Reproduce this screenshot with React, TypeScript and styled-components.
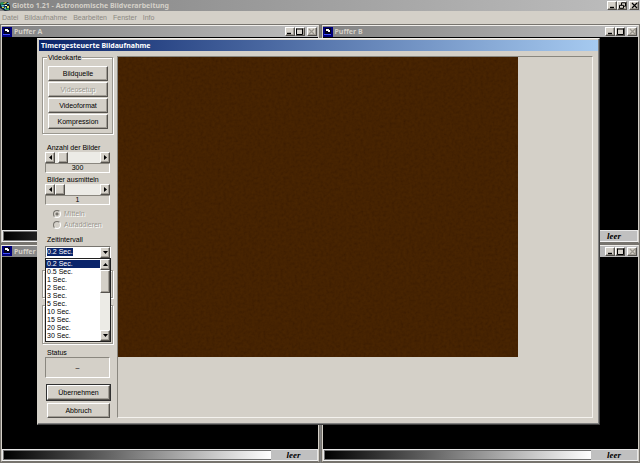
import React, { useState } from "react";
import styled, { createGlobalStyle, css } from "styled-components";

const face = "#d4d0c8";
const ui = `"Liberation Sans", Arial, sans-serif`;
const caption = `"Noto Sans", "Open Sans", sans-serif`;

const GlobalStyle = createGlobalStyle`
  *, *::before, *::after { box-sizing: border-box; }
  body { margin: 0; background: ${face}; color: #000; font: 7px/8px ${ui}; }
  button, select, input { margin: 0; padding: 0; border-radius: 0; font: inherit; color: inherit; }
  svg { display: block; flex: none; }
`;

const raised = css`
  background: ${face};
  border: 1px solid;
  border-color: #fff #55524d #55524d #fff;
  box-shadow: inset -1px -1px #a09c94;
`;

const Desktop = styled.div`
  position: relative;
  min-height: 100vh;
  display: flex;
  flex-direction: column;
`;

const TitleBar = styled.header<{ $kind: "main" | "child" | "dialog" }>`
  display: flex;
  align-items: center;
  height: 11px;
  flex: none;
  padding: ${(p) => (p.$kind === "dialog" ? "0 2px" : "0 1px 0 0")};
  gap: 2px;
  color: ${(p) => (p.$kind === "dialog" ? "#fff" : face)};
  background: ${(p) =>
    p.$kind === "dialog"
      ? "linear-gradient(90deg, #0a246a, #a6caf0)"
      : "linear-gradient(90deg, #828282, #bebebe)"};
`;

const Title = styled.h1`
  flex: 1;
  margin: 0;
  font: bold 7px/11px ${caption};
  white-space: nowrap;
`;

const Controls = styled.div`
  display: flex;
  & > :last-child { margin-left: 2px; }
`;

const ControlButton = styled.button`
  ${raised}
  width: 10px;
  height: 9px;
  display: grid;
  place-items: center;
`;

const Menu = styled.nav`
  display: flex;
  gap: 6px;
  height: 13px;
  padding: 0 2px;
  flex: none;
  line-height: 13px;
`;

const MenuLink = styled.a`
  color: #8b8882;
  text-decoration: none;
`;

const Workspace = styled.main`
  flex: 1;
  display: grid;
  grid-template: 1fr 1fr / 1fr 1fr;
  column-gap: 1px;
  background: #808080;
`;

const BufferWindow = styled.section`
  display: flex;
  flex-direction: column;
  border: 2px solid ${face};
  border-top-color: #f0eeea;
  border-bottom-color: #77746e;
  outline: 1px solid #77746e;
  outline-offset: -1px;
`;

const Canvas = styled.div`
  flex: 1;
  background: #000;
`;

const BufferStatus = styled.footer`
  display: flex;
  height: 12px;
  flex: none;
  background: #c0c0c0;
  border: 1px solid #e8e8e8;
  border-bottom-color: #f4f4f4;
`;

const Ramp = styled.div`
  flex: 1;
  border: 1px solid #707070;
  border-right: 0;
  background: linear-gradient(90deg, #000, #fff);
`;

const BufferLabel = styled.span`
  width: 46px;
  text-align: center;
  font: italic bold 9px/10px "Liberation Serif", serif;
`;

const Dialog = styled.section`
  position: absolute;
  top: 38px;
  left: 37px;
  right: 40px;
  display: flex;
  flex-direction: column;
  padding: 1px;
  background: ${face};
  border: 1px solid;
  border-color: #f4f2ee #404040 #404040 ${face};
  box-shadow: inset -1px -1px #808080;
`;

const DialogBody = styled.div`
  display: flex;
  gap: 4px;
  padding: 5px 5px 5px 3px;
`;

const Sidebar = styled.form`
  width: 71px;
  flex: none;
  display: flex;
  flex-direction: column;
  padding-top: 1px;
`;

const groupEdge = css`
  border: 1px solid #9a978f;
  box-shadow: inset 1px 1px #fff, 1px 1px #fff;
`;

const Group = styled.fieldset`
  ${groupEdge}
  position: relative;
  display: flex;
  flex-direction: column;
  gap: 1px;
  height: 77px;
  margin: 0 0 10px;
  padding: 8px 4px 4px 5px;
`;

const Legend = styled.legend`
  position: absolute;
  top: -4px;
  left: 4px;
  padding: 0 1px;
  background: ${face};
`;

const PushButton = styled.button<{ $default?: boolean }>`
  ${raised}
  height: 15px;
  line-height: 12px;
  text-align: center;
  white-space: nowrap;
  ${(p) => p.$default && "outline: 1px solid #303030; outline-offset: 0;"}
  &:disabled { color: #9a978f; text-shadow: 1px 1px #fff; }
`;

const Field = styled.div`
  display: flex;
  flex-direction: column;
  margin: 0 3px 3px;
`;

const Label = styled.label`
  height: 8px;
  margin-left: 2px;
  white-space: nowrap;
`;

const ScrollRow = styled.div`
  display: flex;
  height: 11px;
`;

const ArrowButton = styled.button`
  ${raised}
  width: 10px;
  height: 11px;
  flex: none;
  display: grid;
  place-items: center;
`;

const Slider = styled.input`
  appearance: none;
  flex: 1;
  min-width: 0;
  height: 11px;
  background: #ecebe6;
  &::-webkit-slider-thumb {
    appearance: none;
    width: 10px;
    height: 11px;
    ${raised}
  }
`;

const Readout = styled.output<{ $height: number }>`
  display: grid;
  place-items: center;
  height: ${(p) => p.$height}px;
  border: 1px solid;
  border-color: #8a877f #fff #fff #8a877f;
`;

const Radios = styled.div`
  display: flex;
  flex-direction: column;
  gap: 3px;
  margin: 2px 0 7px 11px;
`;

const RadioLabel = styled.label`
  display: flex;
  align-items: center;
  gap: 3px;
  height: 8px;
  color: #9a978f;
  text-shadow: 1px 1px #fff;
`;

const Radio = styled.input`
  appearance: none;
  width: 8px;
  height: 8px;
  border: 1px solid;
  border-color: #77746e #fff #fff #77746e;
  border-radius: 50%;
  &:checked { background: radial-gradient(circle, #77746e 0 1px, transparent 2px); }
`;

const Interval = styled.div`
  position: relative;
  display: flex;
  flex-direction: column;
  margin: 0 2px 0 3px;
`;

const Combo = styled.div`
  display: flex;
  height: 12px;
  margin-top: 2px;
  background: #fff;
  border: 1px solid;
  border-color: #77746e #fff #fff #77746e;
`;

const ComboSelect = styled.select`
  appearance: none;
  flex: 1;
  min-width: 0;
  height: 10px;
  padding-left: 1px;
  border: 0;
  outline: 0;
  color: #fff;
  background: linear-gradient(#0a246a, #0a246a) 1px 1px / 26px 8px no-repeat #fff;
  option { color: #000; }
`;

const Popup = styled.div`
  position: absolute;
  top: 100%;
  left: 0;
  right: 0;
  display: flex;
  background: #fff;
  border: 1px solid #202020;
`;

const Options = styled.ul`
  flex: 1;
  margin: 0;
  padding: 1px 0;
  list-style: none;
`;

const Option = styled.li<{ $selected: boolean }>`
  height: 8px;
  padding-left: 1px;
  ${(p) => p.$selected && "background: #0a246a; color: #fff;"}
`;

const ListScroll = styled.div`
  display: flex;
  flex-direction: column;
  background: #ecebe6;
  & > :last-child { margin-top: auto; }
`;

const ListThumb = styled.div`
  ${raised}
  height: 23px;
`;

const EmptyGroup = styled.div<{ $height: number }>`
  ${groupEdge}
  height: ${(p) => p.$height}px;
`;

const BehindList = styled.div`
  display: flex;
  flex-direction: column;
  gap: 7px;
  padding: 12px 0 5px;
`;

const Actions = styled.div`
  display: flex;
  flex-direction: column;
  gap: 3px;
  margin: 4px 3px 0 5px;
`;

const Preview = styled.div`
  flex: 1;
  border: 1px solid;
  border-color: #8a877f #f4f2ee #f4f2ee #8a877f;
  min-width: 0;
  overflow: hidden;
`;

const VideoImage = styled.svg`
  width: 400px;
  height: 300px;
`;

type Dir = "left" | "right" | "up" | "down";
const arrows: Record<Dir, string> = {
  left: "M4 0v5L1 2.5z",
  right: "M1 0v5L4 2.5z",
  up: "M0 4h5L2.5 1z",
  down: "M0 1h5L2.5 4z",
};

const Arrow = ({ dir }: { dir: Dir }) => (
  <svg width="5" height="5" viewBox="0 0 5 5" aria-hidden="true">
    <path d={arrows[dir]} />
  </svg>
);

const Glyph = ({ kind, color = "#000" }: { kind: "min" | "max" | "restore" | "close"; color?: string }) => (
  <svg width="7" height="7" viewBox="0 0 7 7" fill="none" stroke={color} aria-hidden="true">
    {kind === "min" && <path d="M1 5.5h4" strokeWidth="1.4" />}
    {kind === "max" && <path d="M.5 1h6M.5 .5v6h6v-6" />}
    {kind === "restore" && <path d="M2.5 3V.8h4v3.4H5M.5 3.3h4v3h-4z" />}
    {kind === "close" && <path d="M1 1l5 5M6 1L1 6" strokeWidth="1.2" />}
  </svg>
);

const WindowButtons = ({ main = false }: { main?: boolean }) => (
  <Controls>
    <ControlButton aria-label="Minimieren"><Glyph kind="min" /></ControlButton>
    <ControlButton aria-label={main ? "Wiederherstellen" : "Maximieren"}>
      <Glyph kind={main ? "restore" : "max"} />
    </ControlButton>
    <ControlButton aria-label="Schließen"><Glyph kind="close" color={main ? "#000" : "#99958c"} /></ControlButton>
  </Controls>
);

const AppIcon = () => (
  <svg width="10" height="10" viewBox="0 0 10 10" aria-hidden="true">
    <path fill="#123" d="M0 2l4-1 4 0 2 4v4l-5 1-5-3z" />
    <path fill="#2a9a5a" d="M0 2l3-1 1 2-3 1zM5 8l4-1v2H5z" />
    <path fill="#e0dc50" d="M3 2l3-1 1 1-3 1zM7 5h2v2H7zM2 6h2v1H2z" />
    <path fill="#58b8d0" d="M1 4h3l1 1-3 1zM7 2h2v1H7zM5 6h1v2H4z" />
    <path fill="#fff" d="M5 4h2v1H5z" />
  </svg>
);

const BufferIcon = () => (
  <svg width="10" height="10" viewBox="0 0 10 10" aria-hidden="true">
    <path fill="#00007c" d="M0 0h10v10H0z" />
    <path fill="#000020" d="M2 1h6v6H2z" />
    <path fill="#fff" d="M3 2h3v1h1v2H5V4H3z" />
    <path fill="#4050ff" d="M1 7h7v1H1z" />
  </svg>
);

const Buffer = ({ name }: { name: string }) => (
  <BufferWindow aria-label={name}>
    <TitleBar $kind="child">
      <BufferIcon />
      <Title as="h2">{name}</Title>
      <WindowButtons />
    </TitleBar>
    <Canvas />
    <BufferStatus>
      <Ramp />
      <BufferLabel>leer</BufferLabel>
    </BufferStatus>
  </BufferWindow>
);

const ScrollField = ({ id, label, initial, max }: { id: string; label: string; initial: number; max: number }) => {
  const [value, setValue] = useState(initial);
  return (
    <Field>
      <Label htmlFor={id}>{label}</Label>
      <ScrollRow>
        <ArrowButton type="button" aria-label="Weniger" onClick={() => setValue(Math.max(1, value - 1))}>
          <Arrow dir="left" />
        </ArrowButton>
        <Slider id={id} type="range" min={1} max={max} value={value} onChange={(e) => setValue(Number(e.target.value))} />
        <ArrowButton type="button" aria-label="Mehr" onClick={() => setValue(Math.min(max, value + 1))}>
          <Arrow dir="right" />
        </ArrowButton>
      </ScrollRow>
      <Readout htmlFor={id} $height={10}>{value}</Readout>
    </Field>
  );
};

const menuItems = ["Datei", "Bildaufnahme", "Bearbeiten", "Fenster", "Info"];
const intervals = ["0.2", "0.5", "1", "2", "3", "5", "10", "15", "20", "30"].map((s) => `${s} Sec.`);

export default function App() {
  const [interval, setInterval] = useState(intervals[0]);
  return (
    <Desktop>
      <GlobalStyle />
      <TitleBar $kind="main">
        <AppIcon />
        <Title>Giotto 1.21 - Astronomische Bildverarbeitung</Title>
        <WindowButtons main />
      </TitleBar>
      <Menu>
        {menuItems.map((m) => <MenuLink key={m} href="#">{m}</MenuLink>)}
      </Menu>
      <Workspace>
        {["A", "B", "C", "D"].map((n) => <Buffer key={n} name={`Puffer ${n}`} />)}
      </Workspace>

      <Dialog role="dialog" aria-label="Timergesteuerte Bildaufnahme">
        <TitleBar $kind="dialog">
          <Title as="h2">Timergesteuerte Bildaufnahme</Title>
        </TitleBar>
        <DialogBody>
          <Sidebar onSubmit={(e) => e.preventDefault()}>
            <Group>
              <Legend>Videokarte</Legend>
              <PushButton type="button">Bildquelle</PushButton>
              <PushButton type="button" disabled>Videosetup</PushButton>
              <PushButton type="button">Videoformat</PushButton>
              <PushButton type="button">Kompression</PushButton>
            </Group>
            <ScrollField id="count" label="Anzahl der Bilder" initial={300} max={3000} />
            <ScrollField id="average" label="Bilder ausmitteln" initial={1} max={100} />
            <Radios>
              <RadioLabel><Radio type="radio" name="mode" defaultChecked disabled />Mitteln</RadioLabel>
              <RadioLabel><Radio type="radio" name="mode" disabled />Aufaddieren</RadioLabel>
            </Radios>
            <Interval>
              <Label htmlFor="interval">Zeitintervall</Label>
              <Combo>
                <ComboSelect id="interval" value={interval} onChange={(e) => setInterval(e.target.value)}>
                  {intervals.map((i) => <option key={i}>{i}</option>)}
                </ComboSelect>
                <ArrowButton as="span" aria-hidden="true"><Arrow dir="down" /></ArrowButton>
              </Combo>
              <Popup>
                <Options role="listbox" aria-label="Zeitintervall">
                  {intervals.map((i) => (
                    <Option key={i} role="option" aria-selected={i === interval} $selected={i === interval} onClick={() => setInterval(i)}>
                      {i}
                    </Option>
                  ))}
                </Options>
                <ListScroll>
                  <ArrowButton type="button" aria-label="Nach oben"><Arrow dir="up" /></ArrowButton>
                  <ListThumb />
                  <ArrowButton type="button" aria-label="Nach unten"><Arrow dir="down" /></ArrowButton>
                </ListScroll>
              </Popup>
            </Interval>
            <BehindList>
              <EmptyGroup $height={28} />
              <EmptyGroup $height={39} />
            </BehindList>
            <Field>
              <Label as="span">Status</Label>
              <Readout $height={21}>–</Readout>
            </Field>
            <Actions>
              <PushButton type="submit" $default>Übernehmen</PushButton>
              <PushButton type="button">Abbruch</PushButton>
            </Actions>
          </Sidebar>
          <Preview>
            <VideoImage role="img" aria-label="Videobild">
              <filter id="grain" x="0" y="0" width="100%" height="100%">
                <feTurbulence type="fractalNoise" baseFrequency="0.35" numOctaves="2" seed="4" />
                <feColorMatrix values="0.09 0 0 0 0.205  0.06 0 0 0 0.09  0 0 0 0 0.005  0 0 0 0 1" colorInterpolationFilters="sRGB" />
              </filter>
              <rect width="100%" height="100%" fill="#452200" />
              <rect width="100%" height="100%" filter="url(#grain)" />
            </VideoImage>
          </Preview>
        </DialogBody>
      </Dialog>
    </Desktop>
  );
}
